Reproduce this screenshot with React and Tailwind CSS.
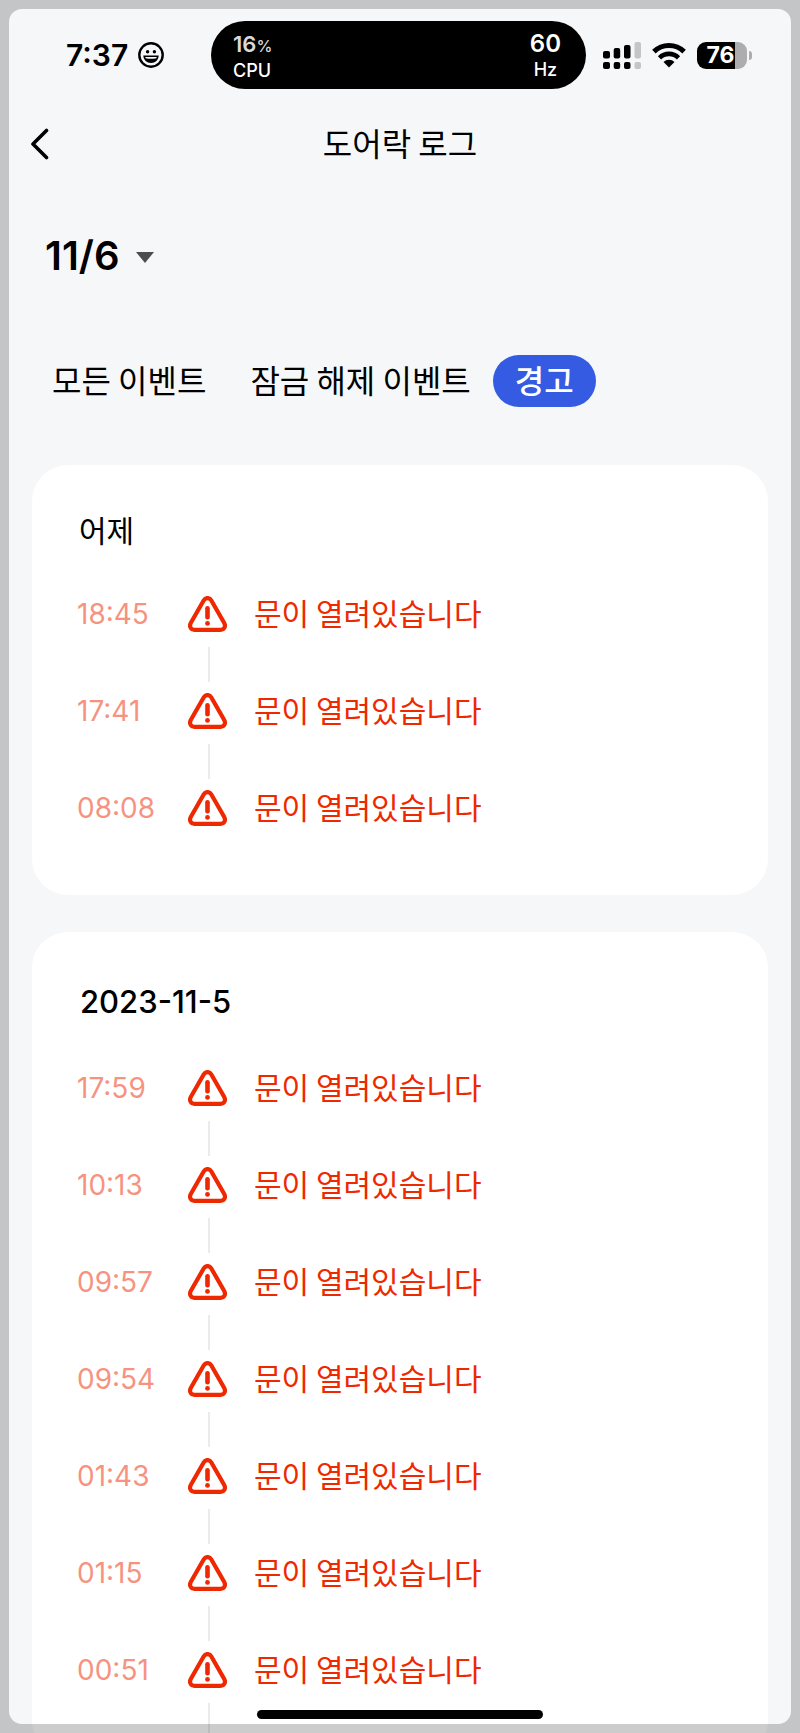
const logs = [
  {
    title: "어제",
    titleStyle: "px-[47px] pt-12 pb-[51px] text-[30px] leading-8",
    times: ["18:45", "17:41", "08:08"],
  },
  {
    title: "2023-11-5",
    titleStyle:
      "px-12 pt-[52px] pb-[50px] text-[31px] leading-9 font-medium font-['Inter',sans-serif]",
    continues: true,
    times: ["17:59", "10:13", "09:57", "09:54", "01:43", "01:15", "00:51"],
  },
];

const tabs = ["모든 이벤트", "잠금 해제 이벤트", "경고"];

function WarningIcon() {
  return (
    <svg className="shrink-0" width="42" height="36" viewBox="0 0 42 36" fill="none">
      <path
        d="M15.8 4.3 L2.9 26.8 C0.9 30.4 2.7 33.8 6.5 33.8 H32.5 C36.3 33.8 38.1 30.4 36.1 26.8 L23.2 4.3 C21.4 1.3 17.6 1.3 15.8 4.3 Z"
        stroke="#ee2800"
        strokeWidth="4.2"
        strokeLinejoin="round"
      />
      <path d="M19.5 12.3 V21.2" stroke="#ee2800" strokeWidth="4.6" strokeLinecap="round" />
      <circle cx="19.5" cy="27.4" r="2.4" fill="#ee2800" />
    </svg>
  );
}

function StatusBar() {
  return (
    <div className="grid h-[68px] grid-cols-[211fr_375fr_214fr] items-center font-['Inter',sans-serif]">
      <div className="flex items-center gap-2.5 pl-[66px]">
        <span className="text-[30px] leading-9 font-semibold">7:37</span>
        <svg className="shrink-0" width="26" height="26" viewBox="0 0 26 26" fill="none">
          <circle cx="13" cy="13" r="11.7" stroke="#000" strokeWidth="2.4" />
          <circle cx="9.6" cy="9.8" r="1.7" fill="#000" />
          <circle cx="16.4" cy="9.8" r="1.7" fill="#000" />
          <path d="M5.3 13.6 H20.7 C20.5 18.2 17.3 21 13 21 C8.7 21 5.5 18.2 5.3 13.6 Z" fill="#000" />
          <path d="M7.2 15 H18.8 L18.3 16.2 C14.7 17 11.3 17 7.7 16.2 Z" fill="#f6f7f9" />
        </svg>
      </div>

      {/* dynamic island  */}
      <div className="flex h-full items-center justify-between rounded-full bg-black pt-1 pr-[25px] pl-[22px] font-medium text-white">
        <div className="text-lg leading-[25px]">
          <p className="text-[#d9d9d9]">
            <span className="text-[22px] font-semibold">16</span>
            <span className="text-base">%</span>
          </p>
          <p>CPU</p>
        </div>
        <div className="text-center text-lg leading-[26px]">
          <p className="text-2xl leading-[26px] font-semibold">60</p>
          <p>Hz</p>
        </div>
      </div>

      <div className="flex items-center gap-[11px] pl-[17px]">
        {/* signal  */}
        <svg className="shrink-0" width="38" height="27" viewBox="0 0 38 27">
          <g fill="#000">
            <rect x="0" y="9" width="7" height="7.5" rx="2" />
            <rect x="10.7" y="6" width="6.5" height="10.5" rx="2" />
            <rect x="21" y="3" width="6.5" height="13.5" rx="2" />
            <rect x="0" y="20" width="7" height="7" rx="2" />
            <rect x="10.7" y="20" width="6.5" height="7" rx="2" />
            <rect x="21" y="20" width="6.5" height="7" rx="2" />
          </g>
          <g fill="#c4c5c7">
            <rect x="31.5" y="0" width="6.5" height="16.5" rx="2" />
            <rect x="31.5" y="20" width="6.5" height="7" rx="2" />
          </g>
        </svg>
        {/* wifi  */}
        <svg className="shrink-0" width="34" height="26" viewBox="0 0 34 26" fill="none">
          <path d="M1.9 9.6 A21.5 21.5 0 0 1 32.1 9.6" stroke="#000" strokeWidth="5" />
          <path d="M7.5 15.8 A13.5 13.5 0 0 1 26.5 15.8" stroke="#000" strokeWidth="4.6" />
          <path d="M17 25.5 L11.5 20 A7.8 7.8 0 0 1 22.5 20 Z" fill="#000" />
        </svg>
        {/* battery  */}
        <div className="flex items-center gap-[2px]">
          <span className="h-[27px] w-[50px] rounded-[9px] bg-linear-to-r from-black from-76% to-[#adadb0] to-76% pr-[3px] text-center text-[23px] leading-[27px] font-bold text-white">
            76
          </span>
          <span className="h-[9px] w-[3px] rounded-r-full bg-[#adadb0]" />
        </div>
      </div>
    </div>
  );
}

function LogCard({ log }) {
  return (
    <section className="rounded-[36px] bg-white pb-2">
      <h2 className={log.titleStyle}>{log.title}</h2>
      <ul className="pl-[45px] text-[#ee2800]">
        {log.times.map((time, i) => (
          <li key={time} className="flex h-[97px]">
            <time className="w-[111px] font-['Inter',sans-serif] text-[28px] leading-9 opacity-50">
              {time}
            </time>
            <div className="flex w-[42px] flex-col items-center">
              <WarningIcon />
              {/* connector  */}
              {(log.continues || i < log.times.length - 1) && (
                <span className="mt-[15px] h-[35px] w-[2px] bg-[#ebebeb]" />
              )}
            </div>
            <p className="ml-6 text-[30px] leading-8">문이 열려있습니다</p>
          </li>
        ))}
      </ul>
    </section>
  );
}

export default function App() {
  return (
    <div
      className="relative h-screen overflow-hidden bg-[#f6f7f9] pt-[21px] text-black
     font-['Noto_Sans_CJK_KR',sans-serif]"
    >
      <StatusBar />

      <header className="grid h-[110px] grid-cols-[1fr_auto_1fr] items-center px-[30px]">
        <button type="button" aria-label="뒤로" className="w-5">
          <svg width="20" height="32" viewBox="0 0 20 32" fill="none">
            <path
              d="M16.5 2.5 L3 16 L16.5 29.5"
              stroke="#000"
              strokeWidth="3.6"
              strokeLinecap="round"
              strokeLinejoin="round"
            />
          </svg>
        </button>
        <h1 className="pb-1 text-[32px] leading-10">도어락 로그</h1>
      </header>

      <button type="button" className="flex h-[113px] items-center gap-4 px-[45px]">
        <span className="font-['Inter',sans-serif] text-[40px] leading-[48px] font-semibold">
          11/6
        </span>
        <svg width="18" height="14" viewBox="0 0 18 14">
          <path d="M0 3 H18 L9 14 Z" fill="#4d4d4f" />
        </svg>
      </button>

      <nav className="flex px-[30px] pt-[43px] pb-[58px]">
        {tabs.map((tab, i) => (
          <button
            key={tab}
            type="button"
            className={
              i === 2
                ? "h-[52px] rounded-full bg-[#345be2] px-[22px] pb-1 text-[32px] leading-10 font-medium text-white"
                : "h-[52px] px-[22px] pb-1 text-[32px] leading-10"
            }
          >
            {tab}
          </button>
        ))}
      </nav>

      <main className="flex flex-col gap-[37px] px-8">
        {logs.map((log) => (
          <LogCard key={log.title} log={log} />
        ))}
      </main>

      {/* home indicator  */}
      <div className="absolute bottom-[14px] left-1/2 h-[9px] w-[286px] -translate-x-1/2 rounded-full bg-black" />

      {/* dimmed screen edge  */}
      <div className="pointer-events-none absolute inset-[9px] rounded-[13px] shadow-[0_0_0_24px_rgba(0,0,0,0.2)]" />
    </div>
  );
}
